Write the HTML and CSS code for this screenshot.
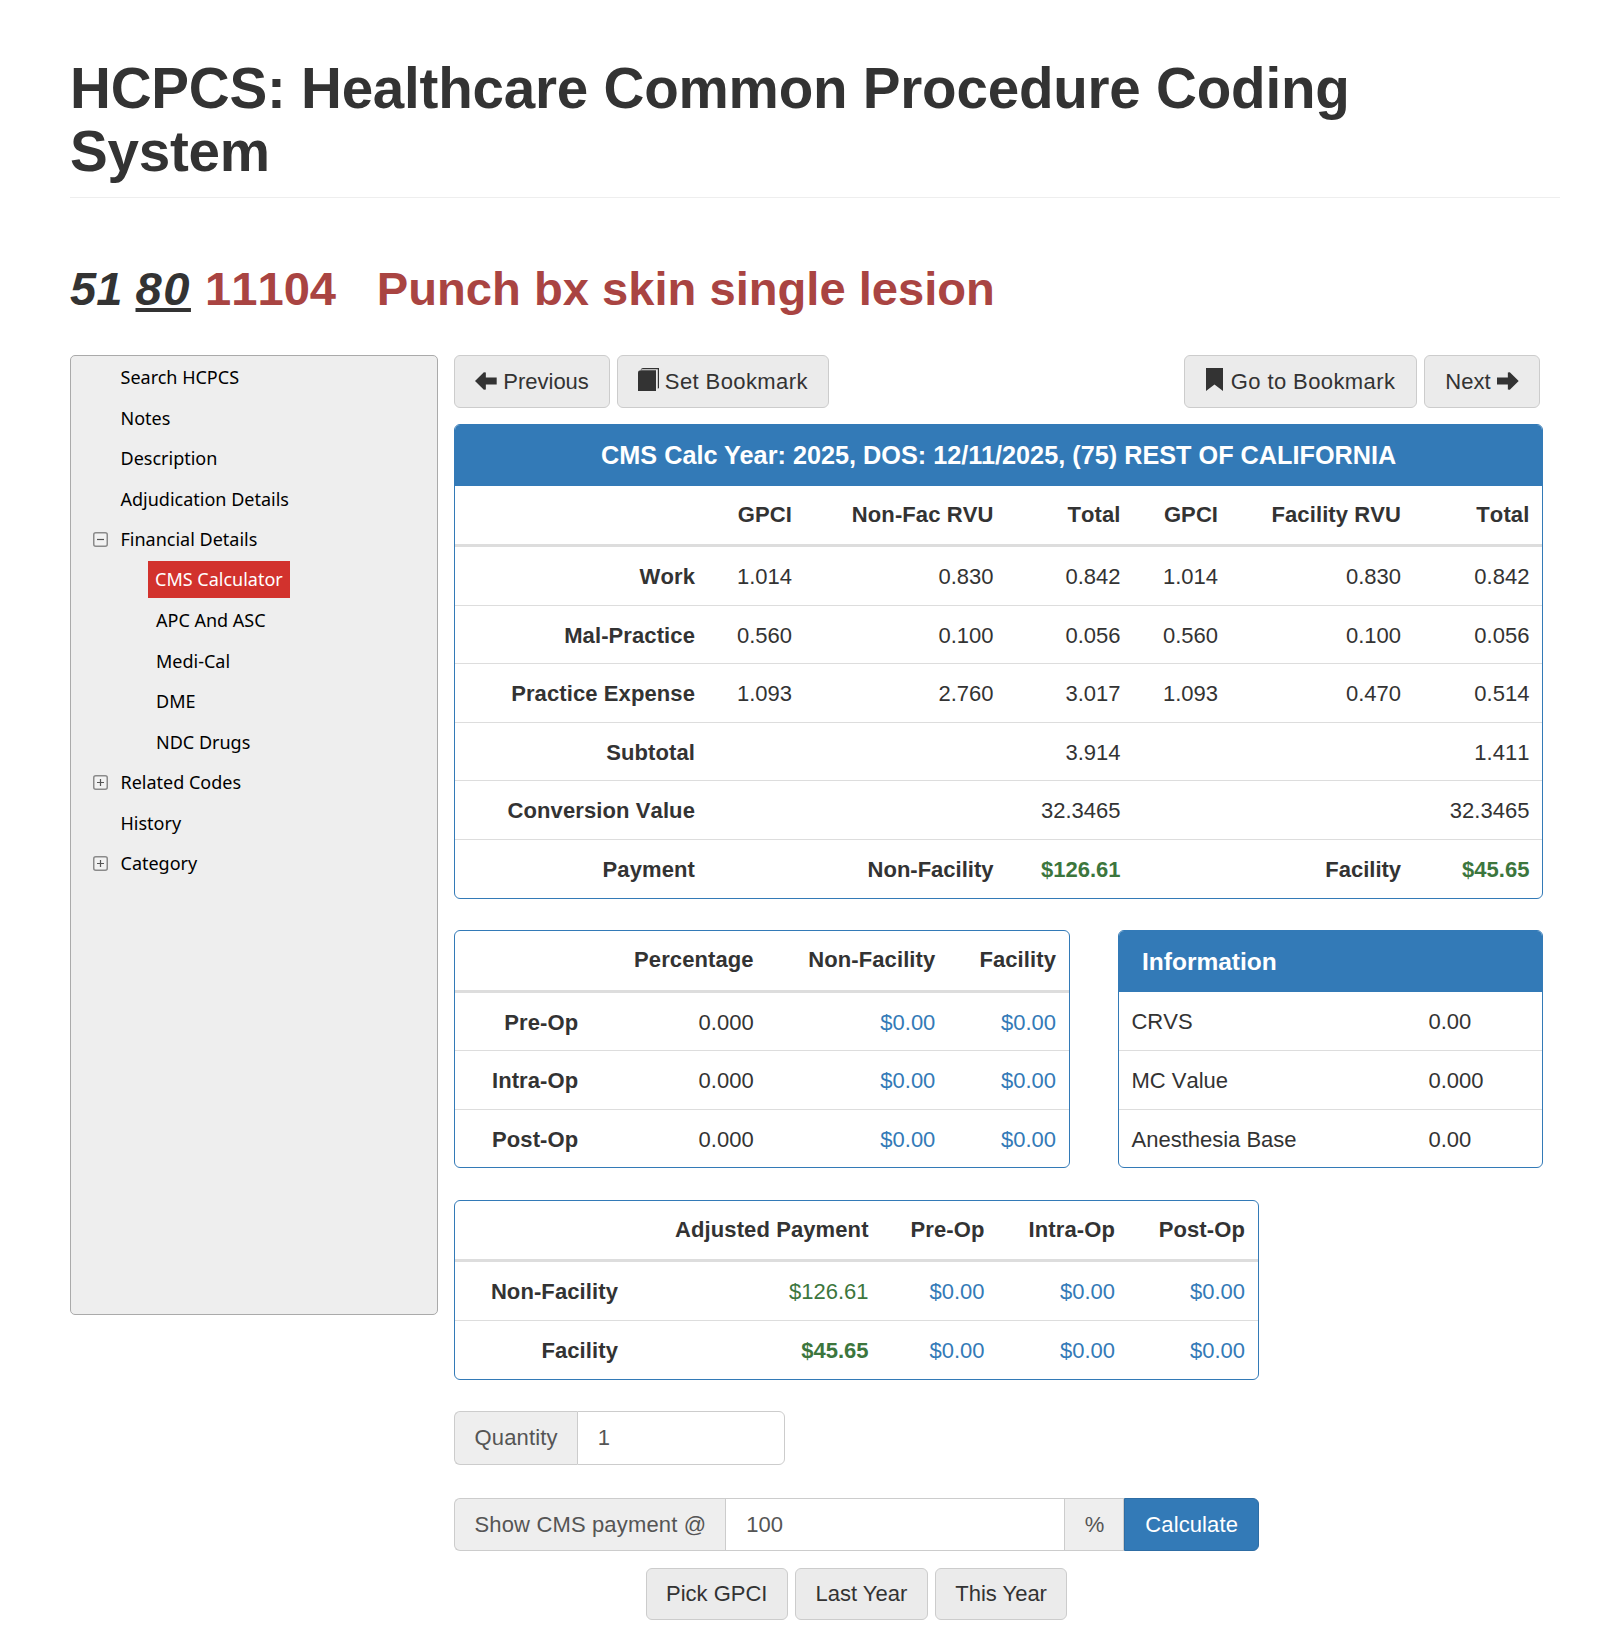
FILE: index.html
```html
<!DOCTYPE html>
<html lang="en">
<head>
<meta charset="utf-8">
<title>HCPCS</title>
<link rel="stylesheet" href="styles.css">
</head>
<body>
<div class="page">
<h1 class="title">HCPCS: Healthcare Common Procedure Coding System</h1>
<h2 class="code"><em>51 <u>80</u></em> <span class="red"><span class="digits">11104</span> &nbsp; Punch bx skin single lesion</span></h2>
<div class="main">
<nav class="tree">
<div class="node">Search HCPCS</div>
<div class="node">Notes</div>
<div class="node">Description</div>
<div class="node">Adjudication Details</div>
<div class="node"><svg class="tog" viewBox="0 0 15 15"><rect x=".75" y=".75" width="13.5" height="13.5" rx="2" fill="#f2f2f2" stroke="#8a8a8a" stroke-width="1.5"/><path d="M4 7.5h7" stroke="#555" stroke-width="1.2"/></svg>Financial Details</div>
<div class="node sub"><span class="sel">CMS Calculator</span></div>
<div class="node sub"><span class="lbl">APC And ASC</span></div>
<div class="node sub"><span class="lbl">Medi-Cal</span></div>
<div class="node sub"><span class="lbl">DME</span></div>
<div class="node sub"><span class="lbl">NDC Drugs</span></div>
<div class="node"><svg class="tog" viewBox="0 0 15 15"><rect x=".75" y=".75" width="13.5" height="13.5" rx="2" fill="#f2f2f2" stroke="#8a8a8a" stroke-width="1.5"/><path d="M4 7.5h7M7.5 4v7" stroke="#555" stroke-width="1.2"/></svg>Related Codes</div>
<div class="node">History</div>
<div class="node"><svg class="tog" viewBox="0 0 15 15"><rect x=".75" y=".75" width="13.5" height="13.5" rx="2" fill="#f2f2f2" stroke="#8a8a8a" stroke-width="1.5"/><path d="M4 7.5h7M7.5 4v7" stroke="#555" stroke-width="1.2"/></svg>Category</div>
</nav>
<section class="content">
<div class="toolbar">
<div class="grp">
<a class="btn"><svg class="ico" viewBox="0 0 22 18"><path d="M0 9 9 0l2 .5v5h11v7H11v5l-2 .5z" fill="#333"/></svg>Previous</a>
<a class="btn wide"><svg class="ico book" viewBox="0 0 21 23"><path d="M5 0h16v20l-1.200 .8V1.200H5.500C4 1.200 3 1.600 2.500 2.200 3 .9 4 0 5 0z" fill="#333"/><path d="M0 4.500c0-1.500 1.500-2.200 3-2.200h15V23H0z" fill="#333"/></svg>Set Bookmark</a>
</div>
<div class="grp right">
<a class="btn wide"><svg class="ico mark" viewBox="0 0 17 23"><path d="M0 0h17v23l-8.500-6.500L0 23z" fill="#333"/></svg>Go to Bookmark</a>
<a class="btn">Next<svg class="ico after" viewBox="0 0 22 18"><path d="M22 9 13 0l-2 .5v5H0v7h11v5l2 .5z" fill="#333"/></svg></a>
</div>
</div>
<div class="panel">
<div class="head center">CMS Calc Year: 2025, DOS: 12/11/2025, (75) REST OF CALIFORNIA</div>
<table class="t t1">
<thead><tr><th></th><th>GPCI</th><th>Non-Fac RVU</th><th>Total</th><th>GPCI</th><th>Facility RVU</th><th>Total</th></tr></thead>
<tbody>
<tr><th>Work</th><td>1.014</td><td>0.830</td><td>0.842</td><td>1.014</td><td>0.830</td><td>0.842</td></tr>
<tr><th>Mal-Practice</th><td>0.560</td><td>0.100</td><td>0.056</td><td>0.560</td><td>0.100</td><td>0.056</td></tr>
<tr><th>Practice Expense</th><td>1.093</td><td>2.760</td><td>3.017</td><td>1.093</td><td>0.470</td><td>0.514</td></tr>
<tr><th>Subtotal</th><td></td><td></td><td>3.914</td><td></td><td></td><td>1.411</td></tr>
<tr><th>Conversion Value</th><td></td><td></td><td>32.3465</td><td></td><td></td><td>32.3465</td></tr>
<tr><th>Payment</th><td></td><td><b>Non-Facility</b></td><td class="green"><b>$126.61</b></td><td></td><td><b>Facility</b></td><td class="green"><b>$45.65</b></td></tr>
</tbody>
</table>
</div>
<div class="pair">
<div class="panel p2">
<table class="t t2">
<thead><tr><th></th><th>Percentage</th><th>Non-Facility</th><th>Facility</th></tr></thead>
<tbody>
<tr><th>Pre-Op</th><td>0.000</td><td class="blue">$0.00</td><td class="blue">$0.00</td></tr>
<tr><th>Intra-Op</th><td>0.000</td><td class="blue">$0.00</td><td class="blue">$0.00</td></tr>
<tr><th>Post-Op</th><td>0.000</td><td class="blue">$0.00</td><td class="blue">$0.00</td></tr>
</tbody>
</table>
</div>
<div class="panel p3">
<div class="head info">Information</div>
<table class="t t3">
<tbody>
<tr><td>CRVS</td><td>0.00</td></tr>
<tr><td>MC Value</td><td>0.000</td></tr>
<tr><td>Anesthesia Base</td><td>0.00</td></tr>
</tbody>
</table>
</div>
</div>
<div class="panel p4">
<table class="t t4">
<thead><tr><th></th><th>Adjusted Payment</th><th>Pre-Op</th><th>Intra-Op</th><th>Post-Op</th></tr></thead>
<tbody>
<tr><th>Non-Facility</th><td class="green">$126.61</td><td class="blue">$0.00</td><td class="blue">$0.00</td><td class="blue">$0.00</td></tr>
<tr><th>Facility</th><td class="green"><b>$45.65</b></td><td class="blue">$0.00</td><td class="blue">$0.00</td><td class="blue">$0.00</td></tr>
</tbody>
</table>
</div>
<div class="ig qty"><span class="addon">Quantity</span><span class="field">1</span></div>
<div class="ig pct"><span class="addon">Show CMS payment @</span><span class="field grow">100</span><span class="addon mid">%</span><a class="calc">Calculate</a></div>
<div class="under"><a class="btn">Pick GPCI</a><a class="btn">Last Year</a><a class="btn">This Year</a></div>
</section>
</div>
</div>
</body>
</html>
```
FILE: styles.css
```css
* { box-sizing: border-box; }
html, body { margin: 0; background: #fff; }
body { font-family: "Liberation Sans", Arial, sans-serif; font-size: 22px; line-height: 31.500px; color: #333; font-kerning: none; }
.page { padding: 0 0 0 70px; height: 1638px; overflow: hidden; }
.title { margin: 0; padding: 58px 0 14px; font-size: 56.570px; line-height: 62.700px; font-weight: 700; color: #333; border-bottom: 1px solid #eee; width: 1490px; letter-spacing: -0.220px; font-kerning: normal; }
.code { margin: 0; padding-top: 60.600px; height: 156.600px; font-size: 47.140px; line-height: 60px; font-weight: 700; }
.code em { font-style: italic; }
.code u { letter-spacing: 1.500px; }
.red { color: #a94442; font-kerning: normal; }
.digits { font-kerning: none; margin: 0 1.500px 0 1px; }
.main { display: flex; align-items: flex-start; gap: 15.600px; }
.tree { width: 368.400px; height: 960px; flex: none; background: #eee; border: 1px solid #aaa; border-radius: 5px; padding: 1px 0 0; font-family: "Noto Sans", sans-serif; font-size: 18px; color: #000; font-kerning: normal; }
.node { position: relative; height: 40.500px; line-height: 40px; padding-left: 49.500px; white-space: nowrap; }
.node.sub { padding-left: 77px; }
.lbl { padding-left: 8px; }
.sel { display: inline-block; background: #d2322d; color: #fff; line-height: 37.400px; padding: 0 7px; margin-top: 1.200px; vertical-align: top; }
.tog { position: absolute; left: 22px; top: 13px; width: 15px; height: 15px; }
.content { width: 1089.400px; flex: none; }
.toolbar { display: flex; justify-content: space-between; width: 1086.400px; margin-bottom: 16.300px; }
.grp { display: flex; gap: 7px; }
.btn { display: inline-flex; align-items: center; height: 52.700px; padding: 0 20px; background: #ebebeb; border: 1px solid #ccc; border-radius: 6px; color: #333; white-space: nowrap; }
.btn.wide { letter-spacing: 0.400px; }
.grp.right .btn { padding: 0 20.500px; }
.ico { width: 21.700px; height: 18px; margin-right: 6.600px; }
.ico.after { margin: 0 0 0 6.600px; }
.ico.book { width: 21px; height: 23px; margin-top: -3px; margin-right: 6px; }
.ico.mark { width: 17px; height: 23px; margin-top: -3px; margin-right: 8px; }
.panel { border: 1px solid #337ab7; border-radius: 6px; overflow: hidden; background: #fff; }
.head { background: #337ab7; color: #fff; font-weight: 700; height: 62px; line-height: 62px; margin: -1px -1px 0; font-size: 25.260px; padding: 0 24px; font-kerning: normal; }
.head.center { text-align: center; }
.head.info { font-size: 24.500px; line-height: 63px; }
.t { width: 100%; border-collapse: collapse; table-layout: fixed; }
.t th, .t td { padding: 14px 13px 12.100px; text-align: right; line-height: 31.500px; border-top: 1px solid #ddd; white-space: nowrap; font-weight: 400; }
.t th { font-weight: 700; letter-spacing: 0.100px; }
.t thead th { padding: 13px 13px 13.600px; border-top: 0; border-bottom: 3px solid #ddd; }
.t tbody tr:first-child th, .t tbody tr:first-child td { border-top: 0; }
.t1 th:nth-child(1) { width: 253px; }
.t1 th:nth-child(2) { width: 97px; }
.t1 th:nth-child(3) { width: 201.500px; }
.t1 th:nth-child(4) { width: 127px; }
.t1 th:nth-child(5) { width: 97.600px; }
.t1 th:nth-child(6) { width: 183px; }
.t2 th:nth-child(1) { width: 136.300px; }
.t2 th:nth-child(2) { width: 175.400px; }
.t2 th:nth-child(3) { width: 181.700px; }
.t4 th:nth-child(1) { width: 176px; }
.t4 th:nth-child(2) { width: 250.600px; }
.t4 th:nth-child(3) { width: 115.900px; }
.t4 th:nth-child(4) { width: 130.500px; }
.t3 td:first-child { width: 297px; }
.t3 td { padding-left: 12.500px; text-align: left; }
.green { color: #3c763d; }
.blue { color: #337ab7; }
.pair { display: flex; justify-content: space-between; margin: 31.800px 0 32px; }
.p2 { width: 616px; }
.p3 { width: 425.400px; }
.p4 { width: 805px; margin-bottom: 31.600px; }
.ig { display: flex; height: 53.500px; }
.qty { width: 331.300px; margin-bottom: 33px; }
.pct { width: 805px; margin-bottom: 16.600px; }
.addon { display: flex; align-items: center; padding: 0 19px 0 19.500px; background: #eee; border: 1px solid #ccc; color: #555; white-space: nowrap; letter-spacing: 0.150px; }
.addon:first-child { border-radius: 6px 0 0 6px; border-right: 0; }
.field { flex: 1; display: flex; align-items: center; padding: 0 20px; border: 1px solid #ccc; border-radius: 0 6px 6px 0; color: #555; }
.field.grow { border-radius: 0; }
.addon.mid { border-left: 0; }
.calc { display: flex; align-items: center; padding: 0 20px; background: #337ab7; border: 1px solid #2e6da4; color: #fff; border-radius: 0 6px 6px 0; letter-spacing: 0.100px; }
.under { display: flex; justify-content: center; gap: 7px; width: 805px; }
.under .btn { font-kerning: normal; padding: 0 19.500px; }
```
